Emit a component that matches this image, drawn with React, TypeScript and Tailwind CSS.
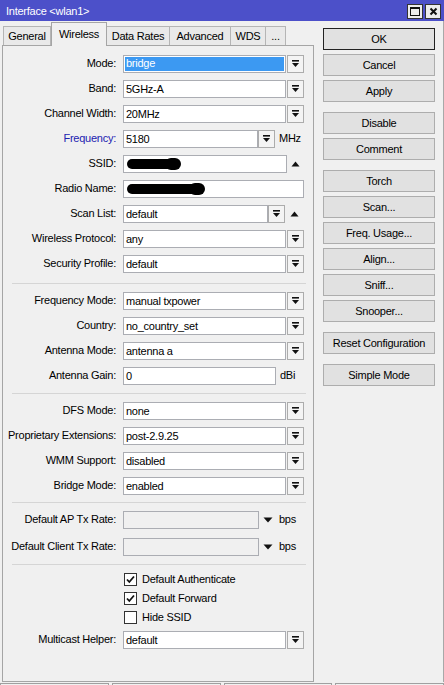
import React from "react";

function DropIcon() {
  return (
    <svg width="9" height="9" viewBox="0 0 9 9">
      <rect x="1" y="1" width="7" height="1.6" fill="#111" />
      <path d="M1 4h7L4.5 8z" fill="#111" />
    </svg>
  );
}

function DropButton() {
  return (
    <div className="w-[17px] h-[18px] flex items-center justify-center bg-[#f4f4f4] border border-[#acacac]">
      <DropIcon />
    </div>
  );
}

function UpArrow() {
  return (
    <svg width="9" height="6" viewBox="0 0 9 6">
      <path d="M0.5 5.5h8L4.5 0.5z" fill="#111" />
    </svg>
  );
}

function DownArrow() {
  return (
    <svg width="10" height="6" viewBox="0 0 10 6">
      <path d="M0.5 0.5h9L5 5.5z" fill="#111" />
    </svg>
  );
}

function Box({
  w,
  value,
  selected,
  disabled,
  children,
}: {
  w: string;
  value?: string;
  selected?: boolean;
  disabled?: boolean;
  children?: React.ReactNode;
}) {
  return (
    <div
      className={`${w} h-[18px] flex items-center border border-[#abadb3] ${
        disabled ? "bg-[#f0f0f0]" : "bg-white"
      } p-px`}
    >
      {selected ? (
        <div className="h-full flex-1 flex items-center bg-[#3c99f2] text-white pl-px">
          {value}
        </div>
      ) : (
        <div className="pl-px leading-[16px] whitespace-nowrap">{value}</div>
      )}
      {children}
    </div>
  );
}

function Row({
  label,
  blue,
  children,
}: {
  label: string;
  blue?: boolean;
  children: React.ReactNode;
}) {
  return (
    <div className="h-[25px] flex items-center">
      <div
        className={`w-[113px] shrink-0 text-right whitespace-nowrap ${
          blue ? "text-[#2222b0]" : ""
        }`}
      >
        {label}:
      </div>
      <div className="ml-[7px] flex items-center">{children}</div>
    </div>
  );
}

function SelectRow({ label, value }: { label: string; value: string }) {
  return (
    <Row label={label}>
      <Box w="w-[163px]" value={value} />
      <div className="ml-px">
        <DropButton />
      </div>
    </Row>
  );
}

function Separator({ className }: { className: string }) {
  return <div className={`ml-[9px] mr-[7px] border-t border-[#d5d5d5] ${className}`} />;
}

// blacked-out value, a couple of overlapping blobs
function Redacted({ w }: { w: string }) {
  return (
    <div className="ml-[1px] flex items-center">
      <div className={`${w} h-[10px] bg-black rounded-[5px]`} />
      <div className="-ml-[14px] w-[16px] h-[12px] bg-black rounded-[6px]" />
    </div>
  );
}

function Check({ label, checked }: { label: string; checked: boolean }) {
  return (
    <div className="h-[19px] flex items-center pl-[121px]">
      <div className="w-[13px] h-[13px] bg-white border border-[#333] flex items-center justify-center">
        {checked && (
          <svg width="9" height="9" viewBox="0 0 9 9">
            <path d="M1 4.5l2.3 2.5L8 1.5" stroke="#111" strokeWidth="1.8" fill="none" />
          </svg>
        )}
      </div>
      <span className="ml-[5px]">{label}</span>
    </div>
  );
}

const tabs = [
  { name: "General", w: "w-[48px]" },
  { name: "Wireless", w: "w-[56px]", active: true },
  { name: "Data Rates", w: "w-[64px]" },
  { name: "Advanced", w: "w-[62px]" },
  { name: "WDS", w: "w-[36px]" },
  { name: "...", w: "w-[21px]" },
];

const buttonGroups = [
  ["OK", "Cancel", "Apply"],
  ["Disable", "Comment"],
  ["Torch", "Scan...", "Freq. Usage...", "Align...", "Sniff...", "Snooper..."],
  ["Reset Configuration"],
  ["Simple Mode"],
];

export default function App() {
  return (
    <div className="w-[444px] h-[685px] flex flex-col bg-[#f0f0f0] text-black text-[11px] tracking-[-0.25px] font-['Liberation_Sans',Arial,sans-serif] overflow-hidden">
      {/* title bar */}
      <div className="h-[21px] shrink-0 flex items-center bg-[#4c50c9] pl-[6px] pr-[3px] pt-[2px]">
        <span className="text-white text-[11px]">Interface &lt;wlan1&gt;</span>
        <div className="ml-auto flex gap-[2px]">
          <div className="w-[16px] h-[15px] bg-[#ececec] border border-[#333] flex items-center justify-center">
            <div className="w-[10px] h-[9px] border border-[#111] border-t-2" />
          </div>
          <div className="w-[16px] h-[15px] bg-[#ececec] border border-[#333] flex items-center justify-center">
            <svg width="9" height="9" viewBox="0 0 9 9">
              <path d="M1.5 1.5l6 6M7.5 1.5l-6 6" stroke="#111" strokeWidth="2" />
            </svg>
          </div>
        </div>
      </div>

      <div className="h-[661px] shrink-0 flex border-r border-[#a8a8a8]">
        {/* tabs + panel */}
        <div className="ml-[2px] w-[312px] flex flex-col">
          <div className="h-[24px] flex items-end pl-px">
            {tabs.map((t) =>
              t.active ? (
                <div
                  key={t.name}
                  className={`${t.w} h-[24px] -mb-px relative z-10 flex items-start justify-center pt-[3px] bg-[#f0f0f0] border border-b-0 border-[#a5a5a5]`}
                >
                  {t.name}
                </div>
              ) : (
                <div
                  key={t.name}
                  className={`${t.w} h-[19px] flex items-center justify-center bg-[#e9e9e9] border border-b-0 border-[#b5b5b5] -ml-px first:ml-0`}
                >
                  {t.name}
                </div>
              )
            )}
          </div>

          <div className="flex-1 border border-[#a5a5a5] bg-[#f0f0f0] pt-[5px]">
            <Row label="Mode">
              <Box w="w-[163px]" value="bridge" selected />
              <div className="ml-px">
                <DropButton />
              </div>
            </Row>
            <SelectRow label="Band" value="5GHz-A" />
            <SelectRow label="Channel Width" value="20MHz" />
            <Row label="Frequency" blue>
              <Box w="w-[135px]" value="5180" />
              <DropButton />
              <span className="ml-[4px]">MHz</span>
            </Row>
            <Row label="SSID">
              <Box w="w-[164px]">
                <Redacted w="w-[52px]" />
              </Box>
              <div className="w-[17px] flex justify-center">
                <UpArrow />
              </div>
            </Row>
            <Row label="Radio Name">
              <Box w="w-[181px]">
                <Redacted w="w-[76px]" />
              </Box>
            </Row>
            <Row label="Scan List">
              <Box w="w-[145px]" value="default" />
              <DropButton />
              <div className="w-[19px] flex justify-center">
                <UpArrow />
              </div>
            </Row>
            <SelectRow label="Wireless Protocol" value="any" />
            <SelectRow label="Security Profile" value="default" />

            <Separator className="mt-[7px] mb-[4px]" />

            <SelectRow label="Frequency Mode" value="manual txpower" />
            <SelectRow label="Country" value="no_country_set" />
            <SelectRow label="Antenna Mode" value="antenna a" />
            <Row label="Antenna Gain">
              <Box w="w-[153px]" value="0" />
              <span className="ml-[4px]">dBi</span>
            </Row>

            <Separator className="mt-[5px] mb-[4px]" />

            <SelectRow label="DFS Mode" value="none" />
            <SelectRow label="Proprietary Extensions" value="post-2.9.25" />
            <SelectRow label="WMM Support" value="disabled" />
            <SelectRow label="Bridge Mode" value="enabled" />

            <Separator className="mt-[4px] mb-[4px]" />

            <Row label="Default AP Tx Rate">
              <Box w="w-[136px]" disabled />
              <div className="w-[17px] flex justify-center">
                <DownArrow />
              </div>
              <span className="ml-[3px]">bps</span>
            </Row>
            <div className="mt-[2px]">
              <Row label="Default Client Tx Rate">
                <Box w="w-[136px]" disabled />
                <div className="w-[17px] flex justify-center">
                  <DownArrow />
                </div>
                <span className="ml-[3px]">bps</span>
              </Row>
            </div>

            <Separator className="mt-[5px] mb-[5px]" />

            <Check label="Default Authenticate" checked />
            <Check label="Default Forward" checked />
            <Check label="Hide SSID" checked={false} />
            <SelectRow label="Multicast Helper" value="default" />
          </div>
        </div>

        {/* action buttons */}
        <div className="ml-[9px] w-[112px] pt-[7px] flex flex-col gap-[10px]">
          {buttonGroups.map((group, i) => (
            <div key={i} className="flex flex-col gap-[4px]">
              {group.map((b) => (
                <div
                  key={b}
                  className={`h-[22px] flex items-center justify-center bg-[#e1e1e1] border ${
                    b === "OK" ? "border-[#222]" : "border-[#adadad]"
                  }`}
                >
                  {b}
                </div>
              ))}
            </div>
          ))}
        </div>
      </div>

      {/* status bar */}
      <div className="h-[3px] shrink-0 flex gap-[3px] pt-px">
        {[0, 1, 2, 3].map((i) => (
          <div key={i} className="w-[110px] border-t border-x border-[#a0a0a0]" />
        ))}
      </div>
    </div>
  );
}
